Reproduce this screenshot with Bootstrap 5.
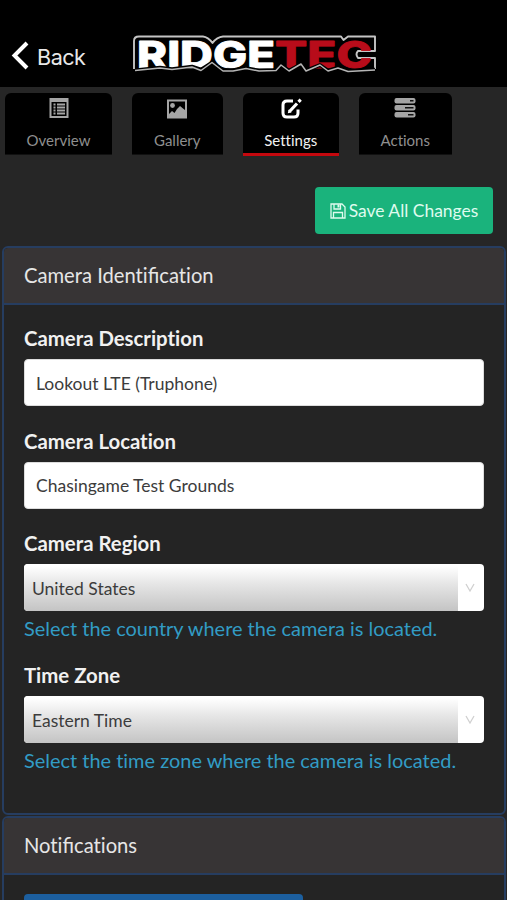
<!DOCTYPE html>
<html lang="en">
<head>
<meta charset="utf-8">
<meta name="viewport" content="width=device-width, initial-scale=1">
<title>Camera Settings</title>
<link href="https://cdn.jsdelivr.net/npm/bootstrap@5.3.0/dist/css/bootstrap.min.css" rel="stylesheet">
<style>
html,body{overflow:hidden;height:900px}
body{background:#262626;font-family:Lato,"Open Sans",sans-serif;font-size:20px;line-height:30px;color:#e6e6e6;font-variant-ligatures:none}
.lig{font-variant-ligatures:normal}
.topbar{height:87px;background:#000;padding:22px 0 0 11px}
.back-link{font-family:Inter,"Liberation Sans",sans-serif;font-size:21.6px;letter-spacing:-.5px;color:#e8e8e8;width:120px;height:68px}
.back-text{margin:2px 0 0 6px}
.tabs{padding:6px 0 0 5px;height:68px}
.tabs .nav-link{background:#000;color:#8f8f8f;border-radius:6px 6px 0 0;height:62px;padding:3px 0 0;font-size:15px;line-height:24px;border-bottom:1px solid #111}
.tabs .nav-link svg{display:block;margin:0 auto 8px;width:24px;height:24px}
.tabs .nav-link.active{color:#f2f2f2;border-bottom:3px solid #c4080e;height:63px}
.w-over{width:107px}.w-gal{width:90.5px;margin-left:20px}.w-set{width:96.5px;margin-left:20px}.w-act{width:92.5px;margin-left:20px}
.btn-save{background:#1ab37c;color:#dffbee;border:0;border-radius:4px;width:178px;height:47px;font-size:17.45px;line-height:24px;padding:0}
.save-row{padding:32px 14px 12px 0}
.save-text{margin:0 0 0 3px}
.panel{background:#242424;border:2px solid #263d60;border-radius:6px;margin:0 0 0 2px;width:504px;color:#e6e6e6}
.panel-head{background:#373435;border-bottom:2px solid #263d60;border-radius:4px 4px 0 0;height:57px;padding:0 20px;line-height:55px;font-size:20.2px}
.panel-main{height:569px;overflow:hidden;margin-bottom:1px}
.panel-content{padding:18px 20px 0}
.panel-next{padding-top:19px}
.panel .form-label{font-weight:700;margin:0 0 6px;display:block;color:#f1f1f1;font-size:20.35px}
.panel .form-control{height:47px;border:1px solid #ddd;border-radius:4px;font-size:17.5px;color:#3c3c3c;background:#fff;padding:1px 11px 0;width:460px}
.field{margin-bottom:19.5px}
.field-pick{margin-bottom:17px}
.picker{width:460px;height:47px;border-radius:4px;background:#fff;overflow:hidden;color:#3c3c3c;font-size:17.5px}
.picker-value{width:434px;height:47px;line-height:50px;padding-left:8px;background:linear-gradient(#fff 5%,#e4e4e4 45%,#c4c4c4)}
.picker-arrow{width:24px;height:47px}
.hint{color:#329cc4;margin-top:2px;height:30px;white-space:nowrap;font-size:19.95px}
.btn-blue{background:#1c5f9f;width:279px;height:47px;border-radius:4px;border:0}
</style>
</head>
<body>
<header class="topbar d-flex">
  <a class="back-link d-flex align-items-center text-decoration-none" href="#">
    <svg width="20" height="30" viewBox="0 0 20 30" fill="none" stroke="#fff" stroke-width="4"><path d="M16 2 3.500 14.500 16 27"/></svg>
    <span class="back-text">Back</span>
  </a>
  <svg width="248" height="60" viewBox="131 22 248 60" role="img" aria-label="Ridgetec">
    <path d="M134 69V41Q134 36.500 139 36.500H203Q208 37 212.500 43Q217 37 223 36.500H341L343.500 40L348 36.500H375V51H358Q355 54 358 58H375V69" fill="none" stroke="#c4c4c4" stroke-width="1.900" stroke-linejoin="round"/>
    <g font-family="Inter,sans-serif" font-weight="800" font-size="37" stroke-width=".8" stroke-linejoin="round">
      <text x="137" y="67.500" textLength="138" lengthAdjust="spacingAndGlyphs" fill="#fff" stroke="#fff">RIDGE</text>
      <text x="275" y="67.500" textLength="97" lengthAdjust="spacingAndGlyphs" fill="#b80c1a" stroke="#b80c1a">TEC</text>
    </g>
    <g fill="none" stroke-linejoin="round">
      <path d="M137 70 160 67.500 172 69 192 66.500 201 69.500 212 62.500 223 70 233 70 246 68 259 70.500 276 70 281 65 289 70.500 301 64 306 70.500 320 65 328 70.500 338 67.500 348 71 375 69.500" stroke="#000" stroke-width="3.600"/>
      <path d="M135 70.500 160 68 172 69.500 192 67 201 70.500 212 62.500 223 71 233 71 246 68.500 259 71 276 70.500 281 65 289 71 301 64 306 71 320 65 328 71 338 68 348 71.500 375 70" stroke="#b5b5b5" stroke-width="1.500"/>
    </g>
  </svg>
</header>

<nav class="tabs nav flex-nowrap align-items-start">
  <a class="nav-link w-over text-center" href="#">
    <svg viewBox="0 0 24 24"><path fill="#a5a5a5" fill-rule="evenodd" d="M2.500 2H21.500V22H2.500ZM4.500 6V20H19.500V6Z"/><path stroke="#a5a5a5" stroke-width="1.800" d="M6.500 8.500H8.500M10 8.500H18M6.500 11.500H8.500M10 11.500H18M6.500 14.500H8.500M10 14.500H18M6.500 17.500H8.500M10 17.500H18"/></svg>
    Overview</a>
  <a class="nav-link w-gal text-center" href="#">
    <svg viewBox="0 0 24 24"><path fill="#a5a5a5" fill-rule="evenodd" d="M2 3.500H22V22.500H2ZM4 5.500V18L7 15 9.500 17 12 13 15 10 18 12.500 20 14V5.500Z"/><circle cx="7.500" cy="9.500" r="2.400" fill="#a5a5a5"/></svg>
    Gallery</a>
  <a class="nav-link active w-set text-center" href="#">
    <svg viewBox="0 0 24 24" fill="none" stroke="#fff"><path stroke-width="3" d="M14 5H8Q4 5 4 9V17Q4 21 8 21H15Q19 21 19 17V13.500"/><path stroke-width="3.200" d="M10.500 15.500 18 7.500M19.500 5.800 21.700 3.600"/><path fill="#fff" stroke="none" d="M8.800 17.300 9.500 13.500 12.600 16.500Z"/></svg>
    Settings</a>
  <a class="nav-link w-act text-center" href="#">
    <svg viewBox="0 0 24 24"><g fill="#a5a5a5"><rect x="1.500" y="2" width="21" height="5.500" rx="2"/><rect x="1.500" y="9" width="21" height="5.500" rx="2"/><rect x="1.500" y="16" width="21" height="5.500" rx="2"/></g><path stroke="#111" stroke-width="1.600" d="M17 4.750H20.500M12 11.750H20.500M15 18.750H20.500"/></svg>
    Actions</a>
</nav>

<div class="save-row d-flex justify-content-end">
  <button class="btn btn-save d-flex align-items-center justify-content-center" type="button">
    <svg width="16" height="16" viewBox="0 0 16 16" fill="none" stroke="#dffbee" stroke-width="1.300"><path d="M1 1H12L15 4V15H1ZM3.500 15V9.500H12.500V15M4 1V6H10.500V1"/><path d="M8.500 1.500V4.500" stroke-width="2"/></svg>
    <span class="save-text">Save All Changes</span>
  </button>
</div>

<section class="panel panel-main">
  <div class="panel-head">Camera Identi<span class="lig">fi</span>cation</div>
  <div class="panel-content">
    <div class="field"><label class="form-label" for="desc">Camera Description</label><input id="desc" class="form-control" value="Lookout LTE (Truphone)"></div>
    <div class="field"><label class="form-label" for="loc">Camera Location</label><input id="loc" class="form-control" value="Chasingame Test Grounds"></div>
    <div class="field-pick">
      <span class="form-label">Camera Region</span>
      <div class="picker d-flex"><div class="picker-value">United States</div><div class="picker-arrow d-flex align-items-center justify-content-center"><svg width="10" height="10" viewBox="0 0 10 10" fill="none" stroke="#d0d0d0" stroke-width="1.300"><path d="M1 1 5 8 9 1"/></svg></div></div>
      <div class="hint">Select the country where the camera is located.</div>
    </div>
    <div class="field-pick">
      <span class="form-label">Time Zone</span>
      <div class="picker d-flex"><div class="picker-value">Eastern Time</div><div class="picker-arrow d-flex align-items-center justify-content-center"><svg width="10" height="10" viewBox="0 0 10 10" fill="none" stroke="#d0d0d0" stroke-width="1.300"><path d="M1 1 5 8 9 1"/></svg></div></div>
      <div class="hint">Select the time zone where the camera is located.</div>
    </div>
  </div>
</section>
<section class="panel">
  <div class="panel-head">Noti<span class="lig">fi</span>cations</div>
  <div class="panel-content panel-next"><button class="btn btn-blue" type="button" aria-label="Notification options"></button></div>
</section>
<script src="https://cdn.jsdelivr.net/npm/bootstrap@5.3.0/dist/js/bootstrap.bundle.min.js"></script>
</body>
</html>
